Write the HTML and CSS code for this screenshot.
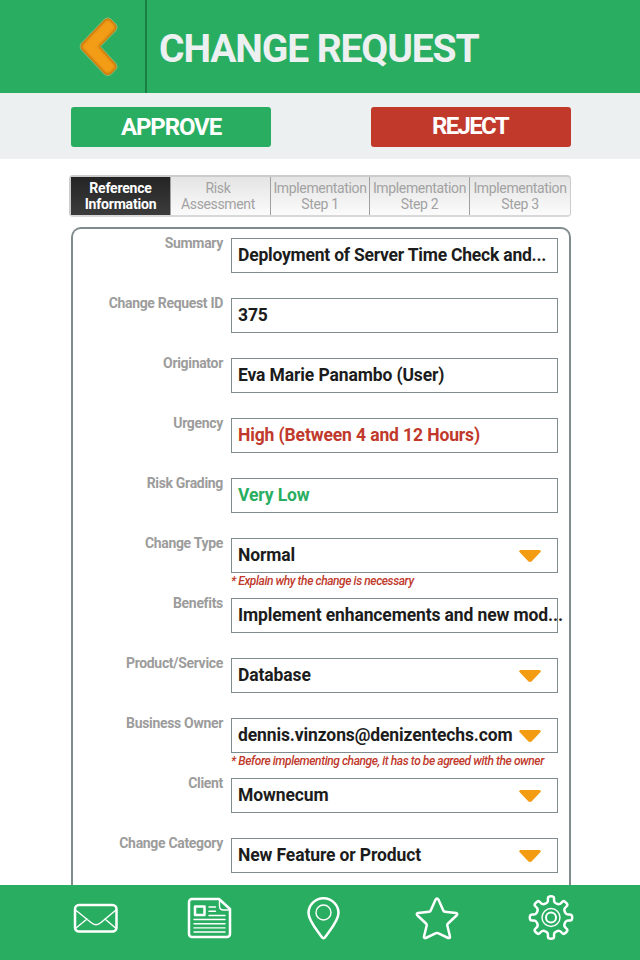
FILE: index.html
```html
<!DOCTYPE html>
<html lang="en">
<head>
<meta charset="utf-8">
<title>Change Request</title>
<link rel="stylesheet" href="styles.css">
</head>
<body>
<div class="app">
  <header class="header">
    <a class="back">
      <svg width="42" height="64" viewBox="0 0 42 64">
        <defs><filter id="soft" x="-20%" y="-20%" width="140%" height="140%"><feGaussianBlur stdDeviation="0.9"/></filter></defs>
        <path class="back-rim" d="M26.500 4Q30 1.500 33 4L38 9Q40.500 12 38 15.500L22.500 31.500 38 48.500Q40.500 52 38 54.500L33 59.500Q30 62 26.500 59.500L3 34.500Q1 31.500 3 28.500Z"/>
        <path class="back-fill" filter="url(#soft)" d="M27.500 6Q30 4 32 6L36 10Q38 12 36 14.500L20 31.500 36 49.500Q38 52 36 53.500L32 57.500Q30 59 27.500 57.500L5 33.500Q3.500 31.500 5 29.500Z"/>
      </svg>
    </a>
    <h1 class="title">CHANGE REQUEST</h1>
  </header>
  <div class="actions">
    <button class="btn approve">APPROVE</button>
    <button class="btn reject">REJECT</button>
  </div>
  <nav class="tabs">
    <a class="tab active">Reference<br>Information</a>
    <a class="tab risk">Risk<br>Assessment</a>
    <a class="tab">Implementation<br>Step 1</a>
    <a class="tab">Implementation<br>Step 2</a>
    <a class="tab">Implementation<br>Step 3</a>
  </nav>
  <main class="panel">
    <div class="row"><span class="label">Summary</span><div class="field"><span class="value tight">Deployment of Server Time Check and...</span></div></div>
    <div class="row"><span class="label">Change Request ID</span><div class="field"><span class="value">375</span></div></div>
    <div class="row"><span class="label">Originator</span><div class="field"><span class="value">Eva Marie Panambo (User)</span></div></div>
    <div class="row"><span class="label">Urgency</span><div class="field"><span class="value red">High (Between 4 and 12 Hours)</span></div></div>
    <div class="row"><span class="label">Risk Grading</span><div class="field"><span class="value green">Very Low</span></div></div>
    <div class="row"><span class="label">Change Type</span><div class="field"><span class="value">Normal</span><i class="arrow"></i></div><small class="note">* Explain why the change is necessary</small></div>
    <div class="row"><span class="label">Benefits</span><div class="field"><span class="value">Implement enhancements and new mod...</span></div></div>
    <div class="row"><span class="label">Product/Service</span><div class="field"><span class="value">Database</span><i class="arrow"></i></div></div>
    <div class="row"><span class="label">Business Owner</span><div class="field"><span class="value">dennis.vinzons@denizentechs.com</span><i class="arrow"></i></div><small class="note">* Before implementing change, it has to be agreed with the owner</small></div>
    <div class="row"><span class="label">Client</span><div class="field"><span class="value">Mownecum</span><i class="arrow"></i></div></div>
    <div class="row"><span class="label">Change Category</span><div class="field"><span class="value">New Feature or Product</span><i class="arrow"></i></div></div>
  </main>
  <footer class="footer">
    <a class="nav"><svg width="46" height="46" viewBox="0 0 46 46"><rect x="2" y="10" width="41.500" height="26.500" rx="4"/><path class="thin" d="m2.500 15 15.500 12.500q5 4.500 10 0L43 15M3 33l11-9m28.500 9L32 24"/></svg></a>
    <a class="nav"><svg width="46" height="46" viewBox="0 0 46 46"><path d="M5 4h27l11 10v25a3 3 0 0 1-3 3H5a3 3 0 0 1-3-3V7a3 3 0 0 1 3-3z"/><path class="thin" d="M32.500 4.500v6.500q0 4 4 4h6M22 12h6.500M22 16.300h6.500M22 20.500h16M7 24.500h31M7 28.700h31M7 32.900h31M7 37h31"/><rect x="8" y="11.500" width="9.500" height="8.500"/></svg></a>
    <a class="nav"><svg width="46" height="46" viewBox="0 0 46 46"><path d="M22.500 43.300Q21.500 43.300 20 41C15.500 34.500 7.500 25.500 7.500 18a15 14.800 0 0 1 30 0C37.500 25.500 29.500 34.500 25 41Q23.500 43.300 22.500 43.300z"/><circle class="thin" cx="22.500" cy="17.500" r="7.500"/></svg></a>
    <a class="nav"><svg width="46" height="46" viewBox="0 0 46 46"><path d="M24.500 4.700 29.300 15.500q.4 1.100 1.600 1.200L42 18q2.300.7.500 2.500L34 28.500q-1 .8-.7 2L36 41.500q.1 2-1.800 1.500L24 38.200q-1-.5-2 0L11.800 43Q9.800 43.500 10 41.500l2.700-11q.3-1.200-.7-2L3.500 20.500Q1.800 18.700 4 18l11.100-1.300q1.200-.1 1.600-1.200L21.500 4.700q1.500-2.400 3 0z"/></svg></a>
    <a class="nav"><svg width="46" height="46" viewBox="0 0 46 46"><path id="gear"/><circle class="thin" cx="23" cy="22.500" r="9"/><circle class="hub" cx="23" cy="22.500" r="5"/></svg></a>
  </footer>
</div>
<script src="gear.js"></script>
</body>
</html>
```
FILE: styles.css
```css
* { box-sizing: border-box; }
body { margin: 0; background: #fff; font-family: "Roboto", "Liberation Sans", sans-serif; }
.app { width: 640px; height: 960px; overflow: hidden; display: flex; flex-direction: column; }
.header { flex: none; height: 93px; background: #29ae61; display: flex; }
.back { width: 147px; border-right: 2px solid #1b7e45; padding: 15px 0 0 78px; }
.back svg { display: block; }
.back-rim { fill: #c87810; stroke: #7bc17c; stroke-width: 1; }
.back-fill { fill: #f39c12; }
.title { margin: 0; padding-left: 12px; color: #ecf0f1; font-size: 39px; line-height: 98px; font-weight: 700; letter-spacing: -1.100px; white-space: nowrap; }
.actions { flex: none; height: 66px; background: #ecf0f1; padding: 14px 69px 0 71px; display: flex; justify-content: space-between; }
.btn { width: 200px; height: 40px; border: 0; border-radius: 3px; padding: 0; color: #fff; font: 700 24px/38px "Roboto", sans-serif; }
.approve { background: #29ae61; letter-spacing: -1.100px; }
.reject { background: #c0392b; letter-spacing: -1.700px; padding: 0 2px 2px 0; }
.tabs { flex: none; margin: 16px 69px 0 69px; height: 42px; border: 2px solid #ccc; border-right-width: 1px; border-radius: 4px; border-bottom-color: #d8d8d8; display: grid; grid-template-columns: 100px 100px 99px 100px 100px; background: linear-gradient(#e4e4e4, #fbfbfb); }
.tab { padding-top: 3px; text-align: center; font-size: 14px; line-height: 16px; letter-spacing: -.35px; color: #a2a2a2; border-right: 1px solid #a0a0a0; white-space: nowrap; }
.tab.risk { padding-right: 5px; }
.tab:last-child { border-right: 0; }
.tab.active { background: linear-gradient(#242424, #3c3c3c); color: #fff; font-weight: 700; letter-spacing: -.2px; }
.panel { flex: 1; min-height: 0; margin: 10px 69px 0 71px; border: 2px solid #7f8c8d; border-bottom: 0; border-radius: 10px 10px 0 0; padding: 9px 11px 0 0; }
.row { height: 60px; display: grid; grid-template-columns: 150px 327px; grid-template-rows: 35px 16px; column-gap: 8px; }
.label { text-align: right; color: #9c9c9c; font-size: 14px; letter-spacing: -.32px; font-weight: 700; line-height: 11px; white-space: nowrap; }
.field { border: 1px solid #7f8c8d; padding: 0 16px 0 6px; display: flex; justify-content: space-between; }
.value { font-size: 17.500px; letter-spacing: -.12px; font-weight: 700; line-height: 32px; color: #1c1c1c; white-space: nowrap; }
.value.tight { letter-spacing: -.22px; }
.value.red { color: #c0392b; }
.value.green { color: #29ae61; }
.arrow { flex: none; width: 22px; height: 12px; margin-top: 11px; background: #f39c12; clip-path: polygon(5% 0, 95% 0, 100% 12%, 57% 96%, 50% 100%, 43% 96%, 0 12%); }
.note { grid-column: 2; color: #c0392b; font-size: 12px; letter-spacing: -.42px; font-style: italic; font-weight: 500; line-height: 16px; white-space: nowrap; }
.footer { flex: none; height: 75px; background: #29ae61; display: flex; justify-content: space-between; padding: 10px 66px 0 73px; }
.nav { width: 46px; height: 46px; }
.nav svg { display: block; fill: none; stroke: #fff; stroke-width: 2.500; stroke-linejoin: round; stroke-linecap: round; }
.nav .thin { stroke-width: 1.400; }
.nav .hub { stroke-width: 2; }
```
FILE: gear.js
```js
// Build the eight-tooth outline around the centre of the icon,
// rounding every corner with a quadratic curve through edge midpoints.
const corners = [];
for (let tooth = 0; tooth < 8; tooth++) {
  for (const [offset, radius] of [[-17, 15], [-10, 16.5], [-9, 21], [0, 21.3], [9, 21], [10, 16.5], [17, 15]]) {
    const angle = (tooth * 45 + offset) * Math.PI / 180;
    corners.push([23 + radius * Math.sin(angle), 22.5 - radius * Math.cos(angle)]);
  }
}
const middle = (a, b) => `${((a[0] + b[0]) / 2).toFixed(2)} ${((a[1] + b[1]) / 2).toFixed(2)}`;
let outline = `M${middle(corners[corners.length - 1], corners[0])}`;
corners.forEach((corner, i) => {
  const next = corners[(i + 1) % corners.length];
  outline += `Q${corner[0].toFixed(2)} ${corner[1].toFixed(2)} ${middle(corner, next)}`;
});
document.getElementById("gear").setAttribute("d", `${outline}Z`);
```
